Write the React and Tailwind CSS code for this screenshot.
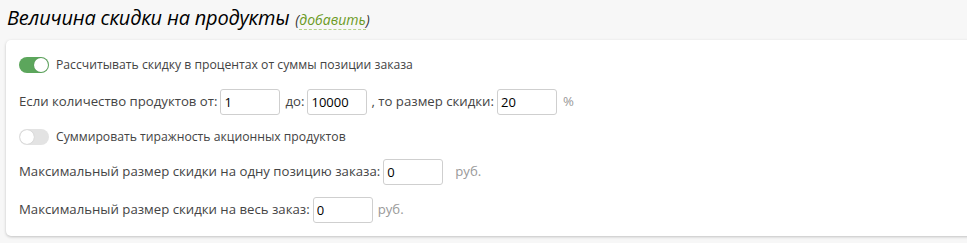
import React, { useState } from 'react'

function Toggle({ on, onChange }) {
  return (
    <button
      type="button"
      onClick={onChange}
      className={`relative w-[30px] h-[16px] rounded-full shrink-0 ${on ? 'bg-[#5ca65c]' : 'bg-[#e3e3e3]'}`}
    >
      <span
        className={`absolute top-[1px] w-[14px] h-[14px] rounded-full bg-white shadow-[0_0_1px_rgba(0,0,0,0.25)] ${on ? 'left-[15px]' : 'left-[1px]'}`}
      />
    </button>
  )
}

function Field({ value }) {
  return (
    <input
      defaultValue={value}
      className="w-[60px] h-[26px] border border-[#cfcfcf] rounded-[3px] px-[3px] text-[13px] text-black bg-white outline-none"
    />
  )
}

export default function App() {
  const [percent, setPercent] = useState(true)
  const [sum, setSum] = useState(false)

  return (
    <div
      className="w-[967px] h-[243px] bg-[#f7f7f7] overflow-hidden text-[#444]"
      style={{ fontFamily: '"Open Sans", "Noto Sans", sans-serif' }}
    >
      {/* Heading */}
      <div className="h-[40px] pl-[7px] pt-[5px] flex items-baseline">
        <h2 className="italic text-[20px] text-black leading-[26px] tracking-[-0.2px]">Величина скидки на продукты</h2>
        <span className="italic text-[14px] ml-[6px] text-[#333]">
          (<a href="#" className="text-[#6b9a24] border-b border-dashed border-[#b7d28a]">добавить</a>)
        </span>
      </div>

      {/* Card */}
      <div className="ml-[6px] w-[980px] h-[196px] bg-white rounded-[5px] shadow-[0_1px_3px_rgba(0,0,0,0.22)] px-[13px] pt-[17px] text-[13.2px]">
        <div className="flex items-center gap-[7px] h-[16px] text-[12.2px]">
          <Toggle on={percent} onChange={() => setPercent(!percent)} />
          <span>Рассчитывать скидку в процентах от суммы позиции заказа</span>
        </div>

        <div className="flex items-center mt-[16px] h-[26px]">
          <span>Если количество продуктов от:</span>
          <span className="ml-[3px]"><Field value="1" /></span>
          <span className="ml-[5px]">до:</span>
          <span className="ml-[3px]"><Field value="10000" /></span>
          <span className="ml-[4px]">, то размер скидки:</span>
          <span className="ml-[3px]"><Field value="20" /></span>
          <span className="ml-[6px] text-[#999]">%</span>
        </div>

        <div className="flex items-center gap-[7px] h-[16px] mt-[14px] text-[12.2px]">
          <Toggle on={sum} onChange={() => setSum(!sum)} />
          <span>Суммировать тиражность акционных продуктов</span>
        </div>

        <div className="flex items-center mt-[14px] h-[26px]">
          <span>Максимальный размер скидки на одну позицию заказа:</span>
          <span className="ml-[3px]"><Field value="0" /></span>
          <span className="ml-[12px] text-[#999]">руб.</span>
        </div>

        <div className="flex items-center mt-[12px] h-[26px]">
          <span>Максимальный размер скидки на весь заказ:</span>
          <span className="ml-[3px]"><Field value="0" /></span>
          <span className="ml-[5px] text-[#999]">руб.</span>
        </div>
      </div>
    </div>
  )
}
